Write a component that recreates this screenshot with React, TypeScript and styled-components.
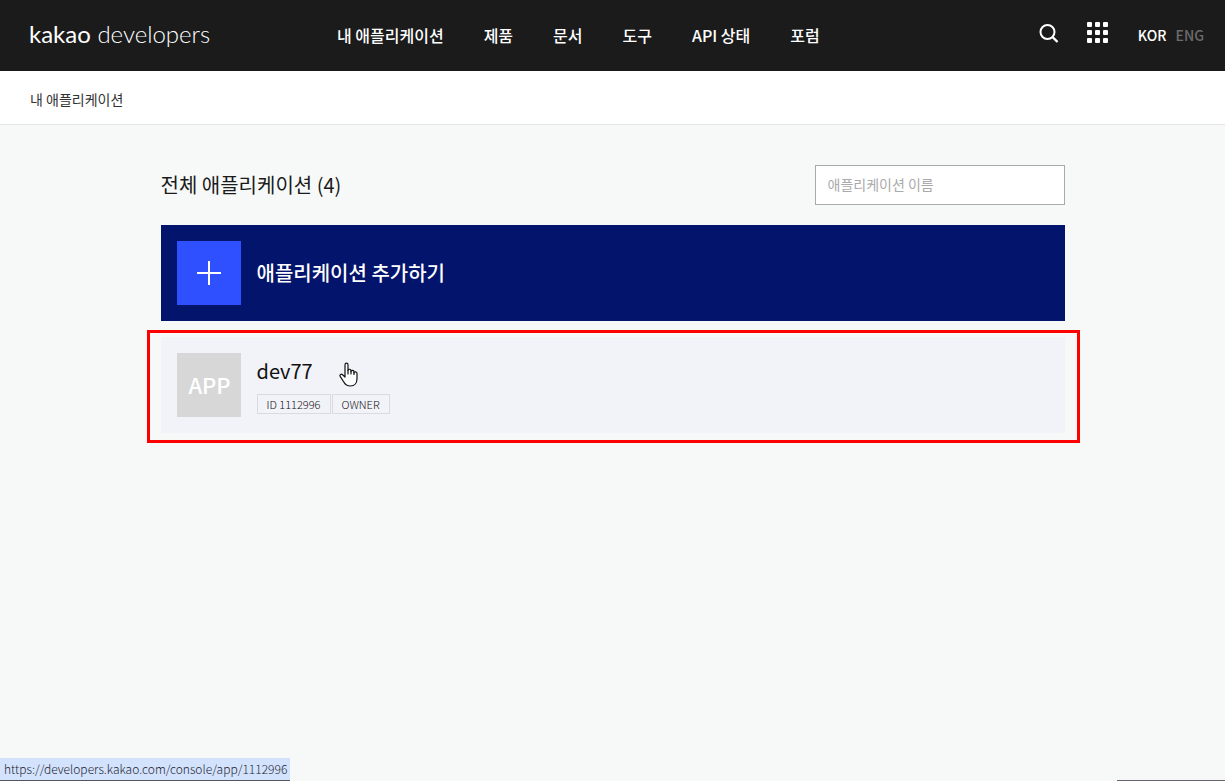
import React from "react";
import styled, { createGlobalStyle } from "styled-components";

const GlobalStyle = createGlobalStyle`
  *, *::before, *::after { box-sizing: border-box; }
  body {
    margin: 0;
    background: #f7f9f8;
    color: #1b1b1c;
    font-family: "Noto Sans CJK KR", "Noto Sans", sans-serif;
  }
  a { color: inherit; text-decoration: none; }
  h1, h2, p, ul { margin: 0; padding: 0; }
  ul { list-style: none; }
  button { border: 0; padding: 0; background: none; font: inherit; color: inherit; cursor: pointer; }
`;

const Page = styled.div`
  position: relative;
  min-height: 100vh;
  overflow: hidden;
`;

const Header = styled.header`
  display: flex;
  align-items: center;
  height: 71px;
  padding: 0 21px 2px 29px;
  background: #1b1b1c;
  color: #fff;
`;

const Logo = styled.a`
  width: 308px;
  padding-bottom: 2px;
  font-family: Lato, sans-serif;
  font-size: 24px;
  line-height: 32px;
  font-weight: 300;
  white-space: nowrap;
`;

const LogoStrong = styled.span`
  font-weight: 400;
`;

const Nav = styled.nav`
  display: flex;
  gap: 40px;
  flex: 1;
  font-size: 16px;
  line-height: 24px;
  font-weight: 500;
  white-space: nowrap;
`;

const Tools = styled.div`
  display: flex;
  align-items: center;
  gap: 28px;
`;

const IconButton = styled.button`
  display: flex;
  padding-bottom: 4px;
`;

const Languages = styled.div`
  display: flex;
  gap: 9px;
  margin-left: 2px;
  font-size: 14px;
  line-height: 20px;
  font-weight: 500;
`;

const Language = styled.button<{ $active?: boolean }>`
  color: ${({ $active }) => ($active ? "#fff" : "#6b6b6c")};
`;

const Breadcrumb = styled.nav`
  display: flex;
  align-items: center;
  height: 54px;
  padding: 3px 30px 0;
  border-bottom: 1px solid #e6e6e6;
  background: #fff;
  font-size: 14px;
  line-height: 20px;
  color: #333;
`;

const Main = styled.main`
  max-width: 904px;
  margin: 0 auto;
  padding-top: 40px;
`;

const TitleRow = styled.div`
  display: flex;
  align-items: center;
  justify-content: space-between;
  margin-bottom: 20px;
`;

const Title = styled.h1`
  font-size: 20px;
  line-height: 30px;
  font-weight: 400;
`;

const SearchField = styled.input`
  width: 250px;
  height: 40px;
  padding: 0 12px 2px;
  border: 1px solid #a9abaa;
  border-radius: 0;
  background: #fff;
  font: inherit;
  font-size: 14px;
  &::placeholder { color: #aaa; opacity: 1; }
`;

const AddButton = styled.button`
  display: flex;
  align-items: center;
  gap: 16px;
  width: 100%;
  padding: 16px;
  background: #02146b;
  color: #fff;
  font-size: 20px;
  line-height: 30px;
  font-weight: 500;
`;

const Tile = styled.span<{ $add?: boolean }>`
  display: flex;
  align-items: center;
  justify-content: center;
  width: 64px;
  height: 64px;
  padding: ${({ $add }) => ($add ? "0" : "0 0 2px 2px")};
  background: ${({ $add }) => ($add ? "#2e50ff" : "#d7d7d7")};
  color: #fff;
  font-size: 22px;
  line-height: 32px;
  font-weight: 500;
`;

const AppList = styled.ul`
  margin-top: 16px;
`;

const AppItem = styled.li`
  position: relative;
`;

const AppLink = styled.a`
  display: flex;
  gap: 16px;
  padding: 16px;
  background: #f2f3f9;
`;

const AppName = styled.h2`
  margin-top: 3px;
  font-size: 20px;
  line-height: 30px;
  font-weight: 400;
  color: #111;
`;

const Tags = styled.div`
  display: flex;
  gap: 1px;
  margin-top: 8px;
`;

const Tag = styled.span`
  height: 20px;
  padding: 0 9px;
  border: 1px solid #dadbe0;
  font-size: 11px;
  line-height: 18px;
  font-weight: 300;
  color: #111;
`;

const Highlight = styled.div`
  position: absolute;
  inset: -7px -15px -10px -14px;
  border: 3px solid #f00;
  pointer-events: none;
`;

const Cursor = styled.svg`
  position: absolute;
  left: 178px;
  top: 25px;
  pointer-events: none;
`;

const StatusBar = styled.div`
  position: absolute;
  left: 0;
  bottom: 0;
  height: 23px;
  padding: 0 3px 0 4px;
  border-bottom: 1px solid #55565c;
  background: #d3e3fd;
  color: #1f2430;
  font-size: 12px;
  line-height: 22px;
  font-weight: 300;
`;

const WindowEdge = styled.div`
  position: absolute;
  right: 0;
  bottom: 0;
  width: 108px;
  height: 1px;
  background: #68636e;
`;

const navItems = ["내 애플리케이션", "제품", "문서", "도구", "API 상태", "포럼"];

const SearchIcon = () => (
  <svg width="20" height="20" viewBox="0 0 20 20" fill="none" stroke="#fff" strokeWidth="2" aria-hidden="true">
    <circle cx="8.5" cy="9" r="7" />
    <path d="M13.5 14L18.5 19" strokeWidth="2.4" />
  </svg>
);

const GridIcon = () => (
  <svg width="21" height="21" viewBox="0 0 21 21" fill="#fff" aria-hidden="true">
    {[0, 8, 16].map((y) =>
      [0, 8, 16].map((x) => <rect key={`${x}-${y}`} x={x} y={y} width="5" height="5" rx="1" />)
    )}
  </svg>
);

const PlusIcon = () => (
  <svg width="24" height="24" viewBox="0 0 24 24" stroke="#fff" strokeWidth="2" aria-hidden="true">
    <path d="M12 0V24M0 12H24" />
  </svg>
);

export default function App() {
  return (
    <Page>
      <GlobalStyle />
      <Header>
        <Logo href="#">
          <LogoStrong>kakao</LogoStrong> developers
        </Logo>
        <Nav>
          {navItems.map((item) => (
            <a href="#" key={item}>{item}</a>
          ))}
        </Nav>
        <Tools>
          <IconButton aria-label="검색"><SearchIcon /></IconButton>
          <IconButton aria-label="메뉴"><GridIcon /></IconButton>
          <Languages>
            <Language $active>KOR</Language>
            <Language>ENG</Language>
          </Languages>
        </Tools>
      </Header>
      <Breadcrumb>
        <a href="#">내 애플리케이션</a>
      </Breadcrumb>
      <Main>
        <TitleRow>
          <Title>전체 애플리케이션 (4)</Title>
          <SearchField type="text" aria-label="애플리케이션 이름" placeholder="애플리케이션 이름" />
        </TitleRow>
        <AddButton>
          <Tile $add><PlusIcon /></Tile>
          애플리케이션 추가하기
        </AddButton>
        <AppList>
          <AppItem>
            <AppLink href="#">
              <Tile>APP</Tile>
              <div>
                <AppName>dev77</AppName>
                <Tags>
                  <Tag>ID 1112996</Tag>
                  <Tag>OWNER</Tag>
                </Tags>
              </div>
            </AppLink>
            <Highlight />
            <Cursor width="19" height="25" viewBox="0 0 19 25" fill="#fff" stroke="#111" strokeWidth="1.2" strokeLinejoin="round" strokeLinecap="round" aria-hidden="true">
              <path d="M6 15V3C6 .6 9 .6 9 3V8.5C9 6.7 12 6.9 12 8.8V9.6C12 7.9 15 8.1 15 9.9V10.8C15 9.4 18 9.6 18 11.4V16.5C18 21 15.5 24 11.5 24C8 24 6.2 22.6 4.8 20L1.2 14.4C.3 12.8 2.4 11.5 3.6 12.8Z" />
              <path d="M9 8.5V12M12 9.5V12M15 10.5V12.5" fill="none" />
            </Cursor>
          </AppItem>
        </AppList>
      </Main>
      <StatusBar>https://developers.kakao.com/console/app/1112996</StatusBar>
      <WindowEdge />
    </Page>
  );
}
